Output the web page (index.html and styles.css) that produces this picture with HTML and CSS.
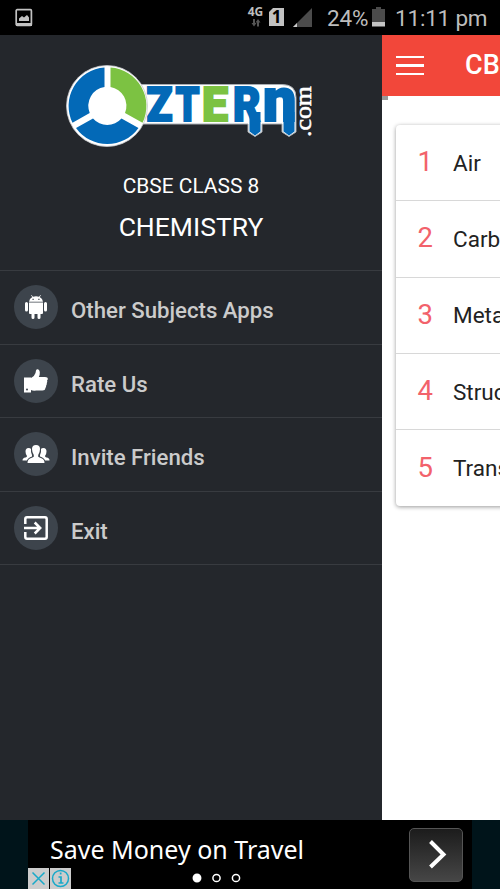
FILE: index.html
```html
<!DOCTYPE html>
<html lang="en">
<head>
<meta charset="utf-8">
<title>CBSE Class 8 Chemistry</title>
<link rel="stylesheet" href="styles.css">
</head>
<body>
<div class="status">
  <svg class="picture" width="18" height="20" viewBox="0 0 18 20"><rect x="1.2" y="1.7" width="15.2" height="15.6" rx="1" fill="none" stroke="#c2c2c2" stroke-width="1.7"/><path d="M1 15h16v3H1zM4 13V10.500l3-2.500 2 1.500 3-2.500 2 2.500V13z" fill="#c2c2c2"/></svg>
  <div class="network"><span>4G</span><svg width="10" height="8" viewBox="0 0 10 8"><path d="M2 0h2v4h1.500L3 7.500.500 4H2zM6 7.500h2v-4h1.500L7 0 4.500 3.500H6z" fill="#555"/></svg></div>
  <div class="sim">1</div>
  <svg class="signal" width="20" height="20" viewBox="0 0 20 20"><path d="M19 0v19H0z" fill="#4b4b4b"/><path d="M0 19l4-4v4z" fill="#ccc"/></svg>
  <span class="percent">24%</span>
  <svg class="battery" width="13" height="20" viewBox="0 0 13 20"><path d="M4 0h5v2h4v13H0V2h4z" fill="#4b4b4b"/><path d="M0 15h13v4.500H0z" fill="#c4c4c4"/></svg>
  <span class="clock">11:11 pm</span>
</div>
<div class="screen">
  <nav class="drawer">
    <header class="brand">
      <svg class="logo" width="260" height="90" viewBox="60 60 260 90">
        <path d="M140 84.500H282q14 0 14 13V132l-7 4.500-7-4.500V124H262v8l-7 4.500-7-4.500V124H140z" fill="#fff" stroke="#a8adb2" stroke-width="1"/>
        <circle cx="107" cy="106" r="40.500" fill="#fff" stroke="#c5c8cb" stroke-width=".8"/>
        <g fill="#0369b7">
          <path d="M104.500 67.500A38.500 38.500 0 0 0 72.500 122.800L89.700 113A19 19 0 0 1 104.500 87z"/>
          <path d="M76 128L93 118.500A19 19 0 0 0 121.500 118.500L138.500 128A38.500 38.500 0 0 1 76 128z"/>
          <path d="M249.500 112h11v19.500l-5.500 4-5.500-4zM283.500 112h11v19.500l-5.500 4-5.500-4z"/>
        </g>
        <path d="M110.500 67.500A38.500 38.500 0 0 1 142.500 122.800L125 113A19 19 0 0 0 110.500 87z" fill="#7cc242"/>
        <g class="wordmark">
          <text x="146.500" y="121" textLength="26" lengthAdjust="spacingAndGlyphs">Z</text>
          <text x="175.500" y="121" textLength="24" lengthAdjust="spacingAndGlyphs">T</text>
          <text class="green" x="202" y="121" textLength="26" lengthAdjust="spacingAndGlyphs">E</text>
          <text x="233" y="121" textLength="27.500" lengthAdjust="spacingAndGlyphs">R</text>
          <text class="last" x="263" y="121" textLength="33.500" lengthAdjust="spacingAndGlyphs">n</text>
        </g>
        <text class="domain" transform="translate(310.500 137) rotate(-90)" textLength="51" lengthAdjust="spacingAndGlyphs">.com</text>
      </svg>
      <div class="grade">CBSE CLASS 8</div>
      <div class="subject">CHEMISTRY</div>
    </header>
    <ul class="menu">
      <li><span class="disc"><svg width="24" height="24" viewBox="0 0 24 24" fill="#fff"><path d="M5 7.500h14V18q0 1-1 1h-1.500v3.500a1.500 1.500 0 0 1-3 0V19h-3v3.500a1.500 1.500 0 0 1-3 0V19H6q-1 0-1-1zM1 8.500a1.500 1.500 0 0 1 3 0V15a1.500 1.500 0 0 1-3 0zM20 8.500a1.500 1.500 0 0 1 3 0V15a1.500 1.500 0 0 1-3 0zM5 6.700Q5.300 3.500 8.300 2L7 .3l.5-.3L9 1.700q3-1 6 0L16.500 0l.5.3L15.700 2q3 1.500 3.300 4.700z"/><path d="M8.500 3.700h1.200v1.200H8.500zM14.300 3.700h1.200v1.200h-1.200z" fill="#3d444c"/></svg></span><span class="label">Other Subjects Apps</span></li>
      <li><span class="disc"><svg width="24" height="24" viewBox="0 0 24 24" fill="#fff"><path d="M0 8.500h7V9q4-2.500 4.500-5L12 1.500Q12.500 0 14 .3q1.500.7 1.800 2.700.2 3-1 5H21q3 0 2.800 2-.1 1-.8 1.500.7 1-.2 2.500.3 1.200-.6 2.500 0 1.500-.8 2.500-.2 2.500-3 2.500h-6Q9 22 7 21v2.500H0z"/><circle cx="3" cy="20.500" r="1" fill="#3d444c"/></svg></span><span class="label">Rate Us</span></li>
      <li><span class="disc"><svg width="28" height="20" viewBox="0 0 28 20" fill="#fff"><path d="M10 5Q10 1 14 1t4 4q0 3-1.800 6v1.800Q17 13.500 20 14.500q2.500 1 2.500 4.500h-17q0-3.500 2.500-4.500 3-1 3.800-1.700V11Q10 8 10 5z"/><path d="M9 5Q8.500 4 6.500 4q-3 0-3 3.500Q3.500 10 5 12q0 1-1.500 1.600Q.500 14 .500 16.500H5q.8-2.500 5-4V11Q8.500 8.500 9 5zM19 5Q19.500 4 21.500 4q3 0 3 3.500 0 2.500-1.500 4.500 0 1 1.500 1.600 3 .4 3 2.900H23q-.8-2.500-5-4V11Q19.500 8.500 19 5z"/></svg></span><span class="label">Invite Friends</span></li>
      <li><span class="disc"><svg width="26" height="26" viewBox="0 0 26 26" fill="none" stroke="#fff" stroke-width="2.500"><path d="M2.300 9V4q0-1.700 1.700-1.700h18q1.700 0 1.700 1.700v18q0 1.700-1.700 1.700H4q-1.700 0-1.700-1.700v-5M1 13h15.500M11.700 7.500l5.500 5.500-5.500 5.500"/></svg></span><span class="label">Exit</span></li>
    </ul>
  </nav>
  <main class="content">
    <header class="appbar">
      <div class="burger"><i></i><i></i><i></i></div>
      <span class="title">CB</span>
    </header>
    <div class="marker"></div>
    <ol class="chapters">
      <li><b>1</b><span>Air</span></li>
      <li><b>2</b><span>Carb</span></li>
      <li><b>3</b><span>Meta</span></li>
      <li><b>4</b><span>Struc</span></li>
      <li><b>5</b><span>Trans</span></li>
    </ol>
  </main>
</div>
<footer class="ad">
  <div class="banner">
    <div class="headline">Save Money on Travel</div>
    <div class="go"><svg width="52" height="52" viewBox="0 0 52 52"><path d="M20.500 12.500L33.500 25.500 20.500 38" fill="none" stroke="#fff" stroke-width="4"/></svg></div>
    <svg class="choices" width="44" height="21" viewBox="0 0 44 21"><path d="M0 0h21v21H0zM22 0H43v21H22z" fill="#ccc"/><g fill="none" stroke="#18a9c9" stroke-width="1.500"><path d="M4.500 4.500l12 12M16.500 4.500l-12 12"/><circle cx="32.500" cy="10.500" r="8"/><path d="M30.500 9H33v6M30.500 15h5" stroke-width="1.700"/><path d="M31.800 5.500h1.700" stroke-width="1.900"/></g></svg>
    <svg class="dots" width="50" height="10" viewBox="0 0 50 10" fill="none" stroke="#fff" stroke-width="1.500"><circle cx="5" cy="5" r="3.700" fill="#fff"/><circle cx="24.500" cy="5" r="3.600"/><circle cx="44" cy="5" r="3.600"/></svg>
  </div>
</footer>
</body>
</html>
```
FILE: styles.css
```css
* { box-sizing: border-box; }
body { margin: 0; width: 500px; height: 889px; overflow: hidden; background: #000; font-family: Roboto, sans-serif; display: flex; flex-direction: column; }
svg { display: block; flex: none; }
ul, ol { list-style: none; margin: 0; padding: 0; }

.status { height: 35px; flex: none; display: flex; align-items: flex-start; color: #bdbdbd; white-space: nowrap; }
.picture { margin: 8px 0 0 15px; }
.network { width: 17px; margin: 7px 0 0 214px; display: flex; flex-direction: column; align-items: center; gap: 2px; font: bold 12px/10px "Noto Sans", sans-serif; }
.sim { width: 15px; height: 18px; margin: 8px 0 0 5px; background: #c2c2c2; color: #000; font: bold 17px/18px "Noto Sans", sans-serif; text-align: center; clip-path: polygon(4px 0, 100% 0, 100% 100%, 0 100%, 0 4px); }
.signal { margin: 8px 0 0 9px; }
.percent { width: 45px; margin-left: 14px; font-size: 22.500px; line-height: 36px; letter-spacing: -.2px; }
.battery { margin: 7px 0 0 0; }
.clock { margin-left: 10px; font-size: 22.500px; line-height: 36px; letter-spacing: -.2px; }

.screen { height: 785px; flex: none; display: flex; }
.drawer { width: 382px; flex: none; background: #24272c; }
.brand { height: 235px; color: #fff; text-align: center; display: flex; flex-direction: column; }
.logo { margin: 25px 0 0 60px; }
.wordmark { font: 900 48px Roboto, sans-serif; fill: #0369b7; stroke: #0369b7; stroke-width: 2px; }
.green { fill: #7cc242; stroke: #7cc242; }
.last { font-size: 62px; }
.domain { font: 23px "Liberation Serif", serif; fill: #fff; stroke: #fff; stroke-width: .5px; }
.grade { margin-top: 23px; font-size: 20.900px; line-height: 26px; }
.subject { margin-top: 11px; font-size: 26.500px; line-height: 34px; }
.menu { border-bottom: 1px solid #383b40; }
.menu li { height: 73.600px; border-top: 1px solid #383b40; padding-left: 14px; display: flex; align-items: center; }
.disc { width: 44px; height: 44px; border-radius: 50%; background: #3d444c; display: flex; align-items: center; justify-content: center; }
.label { margin: 5.500px 0 0 13px; font-size: 22.200px; font-weight: 500; color: #cbcbcb; }

.content { width: 118px; overflow: hidden; background: #fff; }
.appbar { height: 61px; background: #f2473a; display: flex; align-items: center; padding-left: 14px; color: #fff; }
.burger { width: 28px; flex: none; display: flex; flex-direction: column; gap: 6px; }
.burger i { height: 2.600px; background: #fff; }
.title { margin-left: 41px; font-size: 27px; font-weight: 500; line-height: 30px; position: relative; top: -1px; }
.marker { width: 6px; height: 4px; background: #999; }
.chapters { margin: 25px 0 0 13.500px; width: 340px; border-radius: 4px; box-shadow: 0 1px 4px rgba(0,0,0,.4); }
.chapters li { height: 76.300px; display: flex; align-items: center; border-bottom: 1px solid #d8d8d8; }
.chapters li:last-child { border-bottom: 0; }
.chapters b { width: 57.500px; padding-left: 22px; font-size: 27.500px; font-weight: 400; color: #f2626b; flex: none; position: relative; top: -1px; }
.chapters span { font-size: 22.500px; color: #222; }

.ad { height: 69px; flex: none; background: #00141a; padding-left: 28px; }
.banner { position: relative; width: 444px; height: 69px; background: #000; display: flex; justify-content: space-between; padding: 8px 9px 0 22px; }
.headline { color: #fff; font: 25px/43px "Noto Sans", sans-serif; white-space: nowrap; }
.go { width: 54px; height: 54px; border: 1.500px solid #555; border-radius: 5px; background: linear-gradient(#1c1c1c, #464646); }
.choices { position: absolute; left: 0; bottom: 0; }
.dots { position: absolute; left: 164px; bottom: 6px; }
```
